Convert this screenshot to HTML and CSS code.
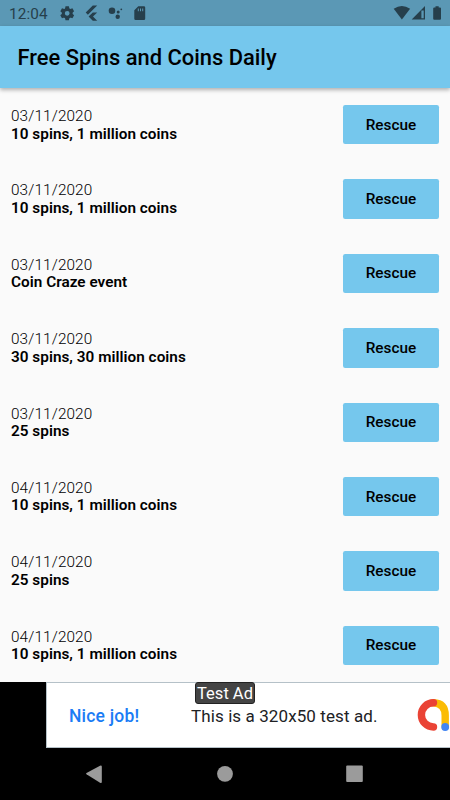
FILE: index.html
```html
<!DOCTYPE html>
<html lang="en">
<head>
<meta charset="utf-8">
<title>Free Spins and Coins Daily</title>
<link rel="stylesheet" href="styles.css">
</head>
<body>
<div class="status">
  <span class="clock">12:04</span>
  <svg class="status-icons" width="90" height="26" viewBox="60 0 90 26">
    <g transform="translate(67.2 13.3)">
      <circle r="3.900" fill="none" stroke="#263f4c" stroke-width="3"/>
      <g fill="#263f4c">
        <path id="tooth" d="M-1.700-7h3.400l.6 3h-4.600z"/>
        <use href="#tooth" transform="rotate(60)"/>
        <use href="#tooth" transform="rotate(120)"/>
        <use href="#tooth" transform="rotate(180)"/>
        <use href="#tooth" transform="rotate(240)"/>
        <use href="#tooth" transform="rotate(300)"/>
      </g>
    </g>
    <g fill="#263f4c">
      <path d="M92.800 5.500h4.400l-9.300 9.300-2.200-2.200zM92.800 12.400h4.400l-4.200 4.200 4.200 4.200h-4.400l-4.200-4.200z"/>
      <circle cx="112" cy="10.800" r="3.300"/>
      <circle cx="118.200" cy="11.900" r="1.500"/>
      <circle cx="121.300" cy="9.300" r="0.900"/>
      <circle cx="117.700" cy="16.800" r="2.200"/>
      <path fill-rule="evenodd" d="M138.300 6.300h5.600q1.300 0 1.300 1.300v11.200q0 1.300-1.300 1.300h-8.300q-1.300 0-1.300-1.300v-8.500zM137.800 8.600v2.600h1V8.600zM140 8.600v2.600h1V8.600zM142.200 8.600v2.600h1V8.600z"/>
    </g>
  </svg>
  <svg class="system-icons" width="50" height="26" viewBox="392 0 50 26">
    <g fill="#263f4c">
      <path d="M393.700 8.800q8.200-5.700 16.400 0L401.900 19.500z"/>
      <path fill-rule="evenodd" d="M425 6v13.500h-13.300zM423.700 10.500h-2.300v7.700h2.300z"/>
      <path d="M435.500 6.200h3.200v1.300h1.300q1 0 1 1v10.300q0 1-1 1h-5.800q-1 0-1-1V8.500q0-1 1-1h1.300z"/>
    </g>
  </svg>
</div>
<header class="appbar"><h1>Free Spins and Coins Daily</h1></header>
<main class="list">
  <div class="row"><div class="info"><div class="date">03/11/2020</div><div class="prize">10 spins, 1 million coins</div></div><button>Rescue</button></div>
  <div class="row"><div class="info"><div class="date">03/11/2020</div><div class="prize">10 spins, 1 million coins</div></div><button>Rescue</button></div>
  <div class="row"><div class="info"><div class="date">03/11/2020</div><div class="prize">Coin Craze event</div></div><button>Rescue</button></div>
  <div class="row"><div class="info"><div class="date">03/11/2020</div><div class="prize">30 spins, 30 million coins</div></div><button>Rescue</button></div>
  <div class="row"><div class="info"><div class="date">03/11/2020</div><div class="prize">25 spins</div></div><button>Rescue</button></div>
  <div class="row"><div class="info"><div class="date">04/11/2020</div><div class="prize">10 spins, 1 million coins</div></div><button>Rescue</button></div>
  <div class="row"><div class="info"><div class="date">04/11/2020</div><div class="prize">25 spins</div></div><button>Rescue</button></div>
  <div class="row"><div class="info"><div class="date">04/11/2020</div><div class="prize">10 spins, 1 million coins</div></div><button>Rescue</button></div>
</main>
<div class="banner">
  <div class="ad">
    <span class="praise">Nice job!</span>
    <span class="message">This is a 320x50 test ad.</span>
    <svg class="logo" width="34" height="34" viewBox="416 698 34 34">
      <g fill="none" stroke-width="7.400" stroke-linecap="round">
        <path d="M433.500 702.800q11.700.5 11.700 12.700v11" stroke="#fbbc04"/>
        <path d="M433.500 702.800a12 12 0 1 0 0 24.200" stroke="#ea4335"/>
      </g>
      <circle cx="445.200" cy="727" r="3.900" fill="#4285f4"/>
    </svg>
    <span class="tag">Test Ad</span>
  </div>
</div>
<nav class="navbar">
  <svg width="450" height="52" viewBox="0 748 450 52" fill="#9b9b9b">
    <path d="M86.500 774.200q-1-.7 0-1.300l13.500-7.200q1.800-.7 1.800 1v15q0 2-1.800 1z"/>
    <circle cx="225" cy="773.800" r="7.900"/>
    <rect x="346.200" y="765.400" width="16.600" height="16.500" rx="1"/>
  </svg>
</nav>
</body>
</html>
```
FILE: styles.css
```css
* { box-sizing: border-box; }
body {
  margin: 0;
  width: 450px;
  height: 800px;
  overflow: hidden;
  display: flex;
  flex-direction: column;
  background: #fafafa;
  color: #000;
  font-family: Roboto, sans-serif;
}
.status {
  height: 26px;
  flex: none;
  display: flex;
  background: #5b98b5;
}
.clock {
  width: 51px;
  margin-left: 9px;
  font-size: 15.300px;
  line-height: 28px;
  letter-spacing: 0.100px;
  color: #263f4c;
}
.system-icons { margin-left: auto; margin-right: 8px; }
.appbar {
  height: 61.500px;
  flex: none;
  padding-left: 17.500px;
  background: #75c7ed;
  box-shadow: 0 2px 4px rgba(0, 0, 0, 0.300);
  z-index: 1;
}
h1 {
  margin: 0;
  font-size: 21.900px;
  line-height: 63px;
  font-weight: 500;
  letter-spacing: 0;
}
.list { height: 594.500px; flex: none; }
.row {
  height: 74.400px;
  padding: 0 11px;
  display: flex;
  justify-content: space-between;
  align-items: center;
}
.info { padding-top: 1.700px; }
.date, .prize {
  font-size: 15.300px;
  line-height: 17.500px;
}
.date { font-weight: 300; letter-spacing: 0.130px; }
.prize { font-weight: 600; letter-spacing: 0.030px; }
button {
  width: 96px;
  height: 39.400px;
  padding: 0;
  border: 0;
  border-radius: 2.200px;
  background: #75c7ed;
  color: #000;
  font: 500 15.300px Roboto, sans-serif;
  letter-spacing: 0.050px;
}
.banner {
  height: 66px;
  flex: none;
  padding-left: 46px;
  background: #000;
}
.ad {
  position: relative;
  height: 66px;
  display: flex;
  align-items: center;
  border: solid #b5c1c8;
  border-width: 1px 0 1px 1px;
  background: #fff;
  white-space: nowrap;
}
.praise {
  width: 122px;
  margin-left: 22px;
  padding-top: 1px;
  color: #1a7cf5;
  font-size: 17.500px;
  font-weight: 500;
  letter-spacing: 0.200px;
}
.message { padding-top: 1px; font-size: 17px; letter-spacing: 0.100px; color: #202124; }
.logo { margin-left: auto; }
.tag {
  position: absolute;
  left: 148px;
  top: -1px;
  width: 60px;
  height: 22px;
  border: 1px solid #222;
  border-radius: 3px;
  background: #444;
  color: #fff;
  font-size: 16.500px;
  line-height: 22px;
  text-align: center;
}
.navbar { height: 52px; flex: none; background: #000; }
.navbar svg { display: block; }
```
